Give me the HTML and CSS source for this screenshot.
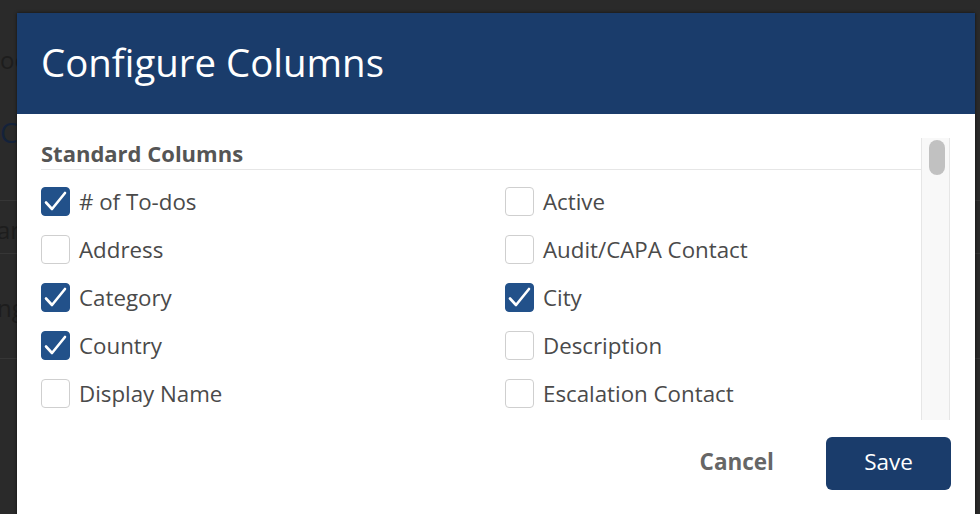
FILE: index.html
```html
<!doctype html>
<html lang="en">

<head>
  <title>Configure Columns</title>
  <link rel="stylesheet" href="styles.css">
</head>

<body>
  <div class="page">
    <div class="page-top">oo</div>
    <div class="page-title">C</div>
    <div class="page-row">ar</div>
    <div class="page-row tall">ng</div>
    <div class="page-row"></div>
  </div>

  <div class="modal">
    <div class="modal-header">
      <h1>Configure Columns</h1>
    </div>
    <div class="modal-body">
      <div class="column-list">
        <h2>Standard Columns</h2>
        <div class="options">
          <label class="option"><span class="box checked"></span># of To-dos</label>
          <label class="option"><span class="box"></span>Active</label>
          <label class="option"><span class="box"></span>Address</label>
          <label class="option"><span class="box"></span>Audit/CAPA Contact</label>
          <label class="option"><span class="box checked"></span>Category</label>
          <label class="option"><span class="box checked"></span>City</label>
          <label class="option"><span class="box checked"></span>Country</label>
          <label class="option"><span class="box"></span>Description</label>
          <label class="option"><span class="box"></span>Display Name</label>
          <label class="option"><span class="box"></span>Escalation Contact</label>
        </div>
      </div>
      <div class="scrollbar">
        <div class="thumb"></div>
      </div>
    </div>
    <div class="modal-footer">
      <button type="button" class="btn-cancel">Cancel</button>
      <button type="button" class="btn-save">Save</button>
    </div>
  </div>
</body>

</html>
```

FILE: styles.css
```css
html,
body {
  height: 100%;
}

body {
  margin: 0;
  font-family: "Open Sans", Arial, sans-serif;
  background-color: #2a2a2a; /* dimmed page behind the dialog */
  overflow: hidden;
}

/* page under the overlay, only the left edge shows */
.page {
  width: 17px;
  padding-top: 44px;
  color: #1d1d1d;
  font-size: 24px;
  text-align: right;
}

.page-top {
  height: 50px;
  line-height: 32px;
}

.page-title {
  height: 106px;
  padding-top: 0;
  line-height: 76px;
  color: #14223a;
  font-size: 28px;
}

.page-row {
  width: 980px;
  height: 52px;
  line-height: 58px;
  border-top: 1px solid #363636;
  text-align: left;
  text-indent: -3px;
}

.page-row.tall {
  height: 104px;
  line-height: 108px;
}

.modal {
  position: absolute;
  left: 17px;
  top: 13px;
  width: 958px;
  height: 530px;
  background-color: #fff;
  box-shadow: 0 0 3px rgba(0, 0, 0, 0.6);
  display: flex;
  flex-direction: column;
}

.modal-header {
  height: 101px;
  background-color: #1a3c6b;
  display: flex;
  align-items: center;
  padding-left: 24px;
}

.modal-header h1 {
  margin: 0;
  margin-top: -3px;
  color: #fff;
  font-size: 38.4px;
  font-weight: 400;
}

.modal-body {
  display: flex;
  padding: 24px 25px 0 24px;
}

.column-list {
  flex: 1;
  height: 282px;
  overflow: hidden;
}

.scrollbar {
  width: 16px;
  height: 280px;
  padding: 2px 4px 0 7px;
  background-color: #f8f8f8;
  border-left: 1px solid #e6e6e6;
  border-right: 1px solid #e6e6e6;
}

.thumb {
  height: 35px;
  background-color: #c1c1c1;
  border-radius: 8px;
}

.column-list h2 {
  margin: 0;
  padding: 1px 0 2px;
  font-size: 22px;
  font-weight: 700;
  color: #555;
  line-height: 28px;
  border-bottom: 1px solid #e6e6e6;
}

.options {
  display: grid;
  grid-template-columns: 464px 1fr;
  row-gap: 19px;
  padding-top: 17px;
}

.option {
  display: flex;
  align-items: center;
  gap: 9px;
  font-size: 22.3px;
  color: #4a4a4a;
  line-height: 29px;
}

.box {
  width: 27px;
  height: 27px;
  border: 1px solid #cfcfcf;
  border-radius: 4px;
  flex-shrink: 0;
}

.box.checked {
  border-color: #22518a;
  background-color: #22518a;
  background-image: url("data:image/svg+xml,%3Csvg xmlns='http://www.w3.org/2000/svg' viewBox='0 0 29 29'%3E%3Cpath d='M5 15.5 L11 22 L24 6' fill='none' stroke='white' stroke-width='2.6' stroke-linecap='round' stroke-linejoin='round'/%3E%3C/svg%3E");
  background-size: 29px 29px;
  background-position: -1px -1px;
}

.modal-footer {
  display: flex;
  justify-content: flex-end;
  align-items: center;
  gap: 52px;
  padding: 17px 24px 0;
}

.modal-footer button {
  font-family: "Open Sans", Arial, sans-serif;
  font-size: 22.5px;
  border: none;
  cursor: pointer;
  line-height: 30px;
}

.btn-cancel {
  background: none;
  color: #666;
  font-weight: 700;
  padding: 0 0 4px;
}

.btn-save {
  width: 125px;
  height: 53px;
  padding: 0 0 4px;
  background-color: #1a3c6b;
  color: #fff;
  border-radius: 6px;
}
```
